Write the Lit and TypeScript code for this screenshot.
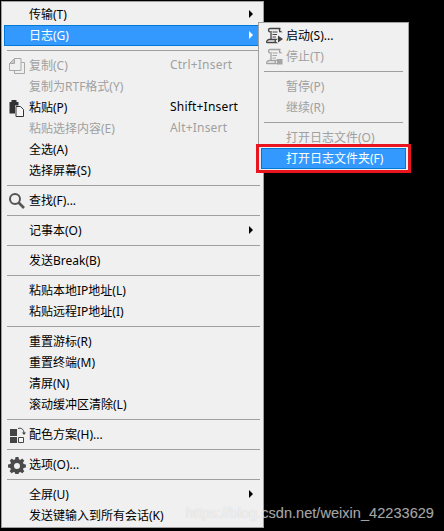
import { LitElement, html, css, svg } from 'lit';
import { customElement } from 'lit/decorators.js';

type Item = {
    label?: string;
    shortcut?: string;
    disabled?: boolean;
    active?: boolean;
    arrow?: boolean;
    icon?: string;
    sep?: boolean;
};

const SEP: Item = { sep: true };

const MAIN: Item[] = [
    { label: '传输(T)', arrow: true },
    { label: '日志(G)', arrow: true, active: true },
    SEP,
    { label: '复制(C)', shortcut: 'Ctrl+Insert', disabled: true, icon: 'copy' },
    { label: '复制为RTF格式(Y)', disabled: true },
    { label: '粘贴(P)', shortcut: 'Shift+Insert', icon: 'paste' },
    { label: '粘贴选择内容(E)', shortcut: 'Alt+Insert', disabled: true },
    { label: '全选(A)' },
    { label: '选择屏幕(S)' },
    SEP,
    { label: '查找(F)...', icon: 'search' },
    SEP,
    { label: '记事本(O)', arrow: true },
    SEP,
    { label: '发送Break(B)' },
    SEP,
    { label: '粘贴本地IP地址(L)' },
    { label: '粘贴远程IP地址(I)' },
    SEP,
    { label: '重置游标(R)' },
    { label: '重置终端(M)' },
    { label: '清屏(N)' },
    { label: '滚动缓冲区清除(L)' },
    SEP,
    { label: '配色方案(H)...', icon: 'palette' },
    SEP,
    { label: '选项(O)...', icon: 'gear' },
    SEP,
    { label: '全屏(U)', arrow: true },
    { label: '发送键输入到所有会话(K)' },
];

const LOG: Item[] = [
    { label: '启动(S)...', icon: 'logStart' },
    { label: '停止(T)', disabled: true, icon: 'logStop' },
    SEP,
    { label: '暂停(P)', disabled: true },
    { label: '继续(R)', disabled: true },
    SEP,
    { label: '打开日志文件(O)', disabled: true },
    { label: '打开日志文件夹(F)', active: true },
];

const scroll = (c: string) => svg`
    <path d="M5 1.500h10.500M5 1.500c-2 0-2 3 0 3.500M6 4v8.500M15.500 1.500c-1.500 1-1.500 2 0 3h-1.500M2 15.500h9c-1.200-.8-1.200-2.200 0-3H4c-2 .5-3 2.500-2 3z" fill="none" stroke=${c} stroke-width="1.300"/>
    <path d="M7.500 5h5M7.500 7.500h4.500M7.500 10h3.500" stroke=${c} stroke-width="1.200"/>`;

const ICONS: Record<string, unknown> = {
    copy: svg`
        <path d="M6.500 1.500h6.500v12H1.500V6.500z" fill="none" stroke="#a8a8a8"/>
        <path d="M6.500 1.500v5h-5z" fill="#c8c8c8" stroke="#a8a8a8"/>
        <path d="M13.500 5.500h3v11h-10v-3" fill="none" stroke="#a8a8a8"/>`,
    paste: svg`
        <path d="M1.500 3h9v3.500H7v8H1.500z" fill="#333"/>
        <path d="M3.500 1h5v2h-5z" fill="#333"/>
        <path d="M8 7.500h4.500l3 3v7H8z" fill="#f6f6f6" stroke="#333"/>`,
    search: svg`
        <circle cx="7" cy="7" r="5" fill="none" stroke="#555" stroke-width="2"/>
        <path d="M10.500 10.500l5.500 5.500" stroke="#555" stroke-width="2.600"/>`,
    palette: svg`
        <path d="M2 3h7v7H2zM2 11h7v6H2z" fill="#444"/>
        <path d="M10.500 11.500h5v5h-5z" fill="#f4f4f4" stroke="#444"/>
        <path d="M10 2.500c3-1 6 .5 6 5" fill="none" stroke="#444"/>
        <path d="M14 6.500h4l-2 2.500z" fill="#444"/>`,
    gear: svg`
        <path fill-rule="evenodd" fill="#4a4a4a" d="M7.500 1h3l.4 2.300 1.400.6 1.900-1.300 2.100 2.100-1.300 1.900.6 1.400 2.300.5v3l-2.300.4-.6 1.400 1.300 1.900-2.100 2.100-1.900-1.300-1.400.6-.5 2.400h-3l-.4-2.400-1.400-.6-1.900 1.300-2.100-2.100 1.300-1.900-.6-1.400L0 11.500v-3l2.400-.5.6-1.400-1.300-1.900 2.100-2.100 1.900 1.300 1.400-.6zM9 7a3 3 0 1 0 0 6 3 3 0 0 0 0-6z"/>`,
    logStart: svg`${scroll('#444')}<path d="M13 8.500l5 3.500-5 3.500z" fill="#444"/>`,
    logStop: svg`${scroll('#a4a4a4')}<path d="M12 11h5.500v5.500H12z" fill="#a4a4a4"/>`,
};

@customElement('menu-list')
export class MenuList extends LitElement {
    static properties = {
        items: { attribute: false },
    };

    items: Item[] = [];

    static styles = css`
        :host {
            display: block;
        }
        .sep {
            height: 9px;
            display: flex;
            align-items: center;
            padding: 0 3px;
        }
        .sep::before {
            content: '';
            flex: 1;
            height: 1px;
            background: #a0a0a0;
        }
        .row {
            height: 21px;
            box-sizing: border-box;
            display: flex;
            align-items: center;
            position: relative;
            color: #000;
            border: 1px solid transparent;
        }
        .row.off {
            color: #a0a0a0;
        }
        .row.on {
            background: #3399ff;
            border-color: #0078d7;
            color: #fff;
        }
        .ico {
            width: 24px;
            flex: none;
            display: flex;
            justify-content: center;
        }
        .ico svg {
            width: 18px;
            height: 18px;
            display: block;
        }
        .label {
            flex: none;
            width: 141px;
            padding-bottom: 2px;
            white-space: nowrap;
        }
        .key {
            padding-bottom: 2px;
            letter-spacing: 0.2px;
            white-space: nowrap;
        }
        .arrow {
            position: absolute;
            right: 9px;
            top: 5px;
            width: 0;
            height: 0;
            border-left: 4px solid #000;
            border-top: 4px solid transparent;
            border-bottom: 4px solid transparent;
        }
        .on .arrow {
            border-left-color: #fff;
        }
    `;

    renderRow(item: Item) {
        if (item.sep) return html`<div class="sep"></div>`;
        const cls = `row${item.disabled ? ' off' : ''}${item.active ? ' on' : ''}`;
        return html`
            <div class=${cls}>
                <span class="ico">
                    ${item.icon ? html`<svg viewBox="0 0 18 18">${ICONS[item.icon]}</svg>` : ''}
                </span>
                <span class="label">${item.label}</span>
                ${item.shortcut ? html`<span class="key">${item.shortcut}</span>` : ''}
                ${item.arrow ? html`<span class="arrow"></span>` : ''}
            </div>
        `;
    }

    render() {
        return this.items.map((i) => this.renderRow(i));
    }
}

@customElement('app-root')
export class AppRoot extends LitElement {
    static styles = css`
        :host {
            display: block;
            position: relative;
            width: 444px;
            height: 531px;
            overflow: hidden;
            background: #000;
            font-family: 'Noto Sans', 'Noto Sans CJK SC', sans-serif;
            font-size: 12px;
        }
        .main {
            box-sizing: border-box;
            width: 263px;
            height: 527px;
            margin: 1px 0 0 1px;
            padding: 2px 0 0 2px;
            background: #f0f0f0;
            border: 1px solid #a0a0a0;
        }
        .sub {
            position: absolute;
            left: 258px;
            top: 22px;
            box-sizing: border-box;
            width: 151px;
            height: 149px;
            padding: 2px 2px 0 2px;
            background: #f0f0f0;
            border: 1px solid #a0a0a0;
        }
        .mark {
            position: absolute;
            left: 256px;
            top: 144px;
            box-sizing: border-box;
            width: 155px;
            height: 29px;
            border: 3px solid #e8141e;
        }
        .watermark {
            position: absolute;
            right: 10px;
            top: 503px;
            font-family: 'Liberation Sans', sans-serif;
            font-size: 14.6px;
            line-height: 20px;
            color: rgba(255, 255, 255, 0.62);
            text-shadow: 0 0 1px rgba(120, 120, 120, 0.3);
            white-space: nowrap;
        }
    `;

    render() {
        return html`
            <div class="main"><menu-list .items=${MAIN}></menu-list></div>
            <div class="sub"><menu-list .items=${LOG}></menu-list></div>
            <div class="mark"></div>
            <div class="watermark">https://blog.csdn.net/weixin_42233629</div>
        `;
    }
}
